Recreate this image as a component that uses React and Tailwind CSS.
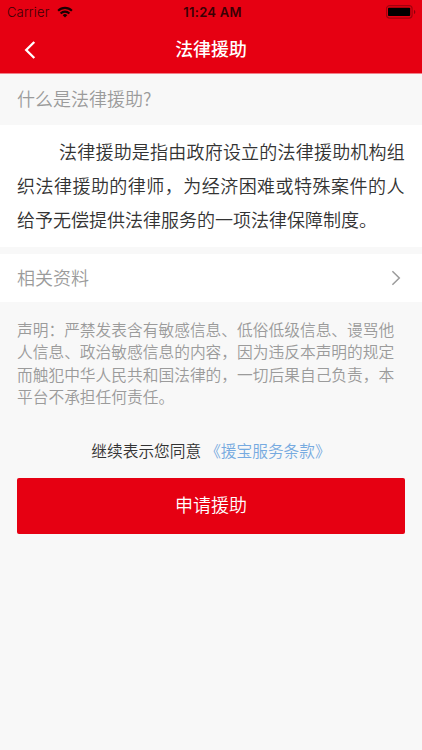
const CONTENT_LINES = [
  '法律援助是指由政府设立的法律援助机构组',
  '织法律援助的律师，为经济困难或特殊案件的人',
  '给予无偿提供法律服务的一项法律保障制度。',
];

const NOTICE_LINES = [
  '声明：严禁发表含有敏感信息、低俗低级信息、谩骂他',
  '人信息、政治敏感信息的内容，因为违反本声明的规定',
  '而触犯中华人民共和国法律的，一切后果自己负责，本',
  '平台不承担任何责任。',
];

// Every line but the last fills the column, so each one is spaced on its own.
const LINE_STYLES = [
  'pl-[42px] tracking-[0.21px]',
  'tracking-[0.47px]',
  'tracking-normal',
];

function StatusBar() {
  return (
    <div className="relative flex h-[24px] items-center justify-between pl-[7px] pr-[6px] text-[#3a0004]">
      <div className="flex items-center gap-[7px]">
        <span className="font-['Inter',sans-serif] text-[13px] leading-none tracking-[0.15px]">Carrier</span>
        <svg width="16" height="12" viewBox="0 0 16 12" fill="none" stroke="#1c0002" strokeWidth="2.1">
          <path d="M1.1 4.7a9.8 9.8 0 0 1 13.8 0" />
          <path d="M3.6 7.5a6.2 6.2 0 0 1 8.8 0" />
          <path d="M8 11.5 5.7 9.2a3.3 3.3 0 0 1 4.6 0z" fill="#1c0002" stroke="none" />
        </svg>
      </div>
      <span className="absolute left-[calc(50%+1.5px)] -translate-x-1/2 whitespace-nowrap font-['Inter',sans-serif] text-[13px] font-semibold leading-none tracking-[0.25px]">
        11:24 AM
      </span>
      <svg width="30" height="14" viewBox="0 0 30 14" fill="none">
        <rect x="0.5" y="0.7" width="25.6" height="12.4" rx="3" stroke="#a4000d" strokeWidth="1.2" />
        <rect x="2" y="2.8" width="22.2" height="8.2" rx="0.8" fill="black" />
        <path d="M28 4.9v4c.8-.4 1.3-1.1 1.3-2s-.5-1.6-1.3-2z" fill="#8a000b" />
      </svg>
    </div>
  );
}

function Header() {
  return (
    <header className="flex h-[74px] flex-col border-b border-[#f0808a] bg-[#e60012]">
      <StatusBar />
      <div className="grid h-[48px] grid-cols-[36px_1fr_36px] items-center">
        <button type="button" className="flex justify-end pt-[3px] text-white" aria-label="返回">
          <svg width="12" height="18" viewBox="0 0 12 18" fill="none" stroke="currentColor" strokeWidth="2.3">
            <path d="M10.3 1 2.2 9l8.1 8" />
          </svg>
        </button>
        <h1 className="pt-px text-center text-[17.9px] font-medium leading-none text-white">法律援助</h1>
      </div>
    </header>
  );
}

export default function App() {
  return (
    <div className="h-[750px] w-[422px] overflow-hidden bg-[#f8f8f8] font-['Noto_Sans_CJK_SC',sans-serif] font-[350]">
      <Header />
      <h2 className="flex h-[51px] items-center pb-[2px] pl-[17px] text-[18px] text-[#9b9b9b]">什么是法律援助?</h2>
      <section className="h-[122px] bg-white pl-[17px] pt-[9px] text-[18px] leading-[34px] text-[#333]">
        {CONTENT_LINES.map((line, i) => (
          <p key={line} className={`whitespace-nowrap ${LINE_STYLES[i]}`}>
            {line}
          </p>
        ))}
      </section>
      <div className="mt-[7px] flex h-[48px] items-center justify-between bg-white pl-[17px] pr-[21px] text-[18px] text-[#9b9b9b]">
        <span className="pb-[2px]">相关资料</span>
        <svg width="10" height="16" viewBox="0 0 10 16" fill="none" stroke="currentColor" strokeWidth="1.5">
          <path d="m1.4 1.2 6.9 6.8-6.9 6.8" />
        </svg>
      </div>
      <section className="pl-[17px] pt-[16.5px] text-[15.73px] leading-[22.6px] text-[#9b9b9b]">
        {NOTICE_LINES.map((line) => (
          <p key={line} className="whitespace-nowrap">
            {line}
          </p>
        ))}
      </section>
      <div className="mt-[30.1px] flex h-[24px] items-center justify-center gap-[4px] text-[15.7px] text-[#333]">
        <span>继续表示您同意</span>
        <a className="text-[#76aae0]">《援宝服务条款》</a>
      </div>
      <button
        type="button"
        className="mx-[17px] mt-[15px] flex h-[56px] w-[388px] items-center justify-center rounded-[2px] bg-[#e60012] pb-[2px] text-[18px] text-white"
      >
        申请援助
      </button>
    </div>
  );
}
